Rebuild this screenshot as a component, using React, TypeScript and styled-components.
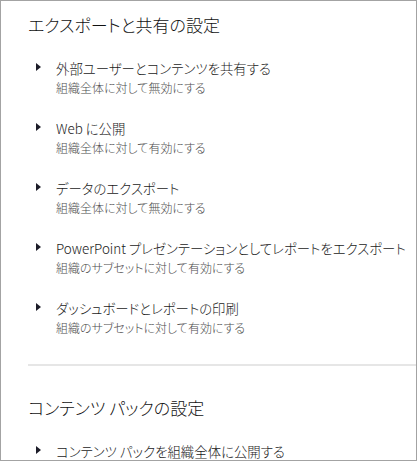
import React from "react";
import styled, { createGlobalStyle } from "styled-components";

const Global = createGlobalStyle`
  html, body { margin: 0; padding: 0; background: #ffffff; }
  body { font-family: "Noto Sans CJK JP", sans-serif; }
`;

const Panel = styled.div`
  width: 417px;
  height: 461px;
  box-sizing: border-box;
  border: 1px solid #a3a3a3;
  background: #ffffff;
  overflow: hidden;
  padding: 12px 0 0 27px;
  font-family: "Noto Sans CJK JP", sans-serif;
  font-feature-settings: "palt" 1;
  font-weight: 300;
`;

const Section = styled.section`
  display: flex;
  flex-direction: column;
`;

const Heading = styled.h2`
  margin: 0;
  font-size: 17px;
  line-height: 24px;
  font-weight: 300;
  color: #111111;
`;

const List = styled.ul`
  list-style: none;
  margin: 21px 0 0 0;
  padding: 0;
  display: flex;
  flex-direction: column;
  gap: 20px;
`;

const Item = styled.li`
  display: flex;
  align-items: flex-start;
  padding-left: 8px;
  gap: 15px;
`;

const Caret = styled.span`
  flex: none;
  width: 0;
  height: 0;
  margin-top: 5px;
  border-top: 4.5px solid transparent;
  border-bottom: 4.5px solid transparent;
  border-left: 5px solid #1c1c28;
`;

const Texts = styled.div`
  display: flex;
  flex-direction: column;
`;

const Title = styled.div`
  font-size: 13.4px;
  line-height: 20px;
  color: #1a1a1a;
  white-space: nowrap;
`;

const Sub = styled.div`
  font-size: 12px;
  line-height: 20px;
  color: #4d4d4d;
  white-space: nowrap;
`;

const Divider = styled.hr`
  margin: 26px 0 30px 0;
  border: none;
  height: 2px;
  background: #e6e6e6;
`;

type Row = { title: string; sub?: string };

const exportRows: Row[] = [
  { title: "外部ユーザーとコンテンツを共有する", sub: "組織全体に対して無効にする" },
  { title: "Web に公開", sub: "組織全体に対して有効にする" },
  { title: "データのエクスポート", sub: "組織全体に対して無効にする" },
  {
    title: "PowerPoint プレゼンテーションとしてレポートをエクスポート",
    sub: "組織のサブセットに対して有効にする",
  },
  { title: "ダッシュボードとレポートの印刷", sub: "組織のサブセットに対して有効にする" },
];

const packRows: Row[] = [
  { title: "コンテンツ パックを組織全体に公開する", sub: "組織全体に対して有効にする" },
];

const Rows = ({ rows }: { rows: Row[] }) => (
  <List>
    {rows.map((r) => (
      <Item key={r.title}>
        <Caret />
        <Texts>
          <Title>{r.title}</Title>
          {r.sub && <Sub>{r.sub}</Sub>}
        </Texts>
      </Item>
    ))}
  </List>
);

export default function App() {
  return (
    <>
      <Global />
      <Panel>
        <Section>
          <Heading>エクスポートと共有の設定</Heading>
          <Rows rows={exportRows} />
        </Section>
        <Divider />
        <Section>
          <Heading>コンテンツ パックの設定</Heading>
          <Rows rows={packRows} />
        </Section>
      </Panel>
    </>
  );
}
